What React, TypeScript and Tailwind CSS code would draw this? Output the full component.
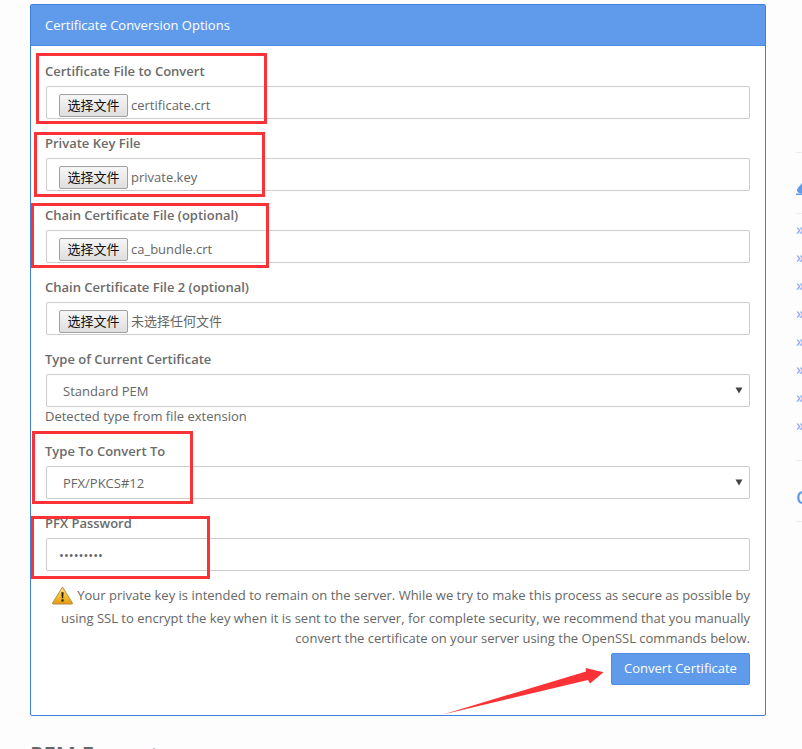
const font = { fontFamily: '"Open Sans", "Noto Sans CJK SC", sans-serif' };

function Label({ children }: { children: React.ReactNode }) {
  return <label className="block h-[18px] -ml-px text-[13px] leading-[18px] font-semibold text-[#6b6b6b] mb-[6px]">{children}</label>;
}

function FileField({ label, file }: { label: string; file: string }) {
  return (
    <div className="mb-[15px]">
      <Label>{label}</Label>
      <div className="h-[33px] border border-[#ccc] rounded-[2px] bg-white flex items-center pl-[12px] pt-[5px]">
        <button type="button" className="w-[69px] h-[23px] border border-[#a0a0a0] rounded-[2px] bg-gradient-to-b from-[#f6f6f6] to-[#dedede] text-[13px] leading-none text-[#111] flex items-center justify-center">选择文件</button>
        <span className="ml-[3px] pt-[2px] text-[13px] text-[#666]">{file}</span>
      </div>
    </div>
  );
}

function SelectField({ value }: { value: string }) {
  return (
    <div className="h-[33px] border border-[#ccc] rounded-[2px] bg-white flex items-center justify-between pl-[16px] pr-[6px] text-[13px] text-[#666]">
      <span className="pt-[2px]">{value}</span>
      <svg width="8" height="7" viewBox="0 0 8 7"><path d="M0.5 0.5h7L4 6.5z" fill="#444" /></svg>
    </div>
  );
}

function Warning() {
  return (
    <svg width="23" height="19" viewBox="0 0 23 20" className="inline-block align-[-7.5px] mb-[3px] mr-[3px]">
      <defs>
        <linearGradient id="w" x1="0" y1="0" x2="0" y2="1">
          <stop offset="0" stopColor="#f8e38a" />
          <stop offset="0.6" stopColor="#f5bb2b" />
          <stop offset="1" stopColor="#e09a12" />
        </linearGradient>
      </defs>
      <path d="M11.5 1 L22 18 Q22.3 19 21 19 H2 Q0.7 19 1 18 Z" fill="url(#w)" stroke="#b9894a" strokeWidth="1" strokeLinejoin="round" />
      <path d="M10.3 6.5h2.4l-.5 6.5h-1.4z" fill="#2b2110" />
      <rect x="10.4" y="14" width="2.2" height="2.4" fill="#2b2110" />
    </svg>
  );
}

function RedBox({ className }: { className: string }) {
  return <div className={`absolute border-[3px] border-[#fb3236] pointer-events-none ${className}`} />;
}

function Sidebar() {
  const links = [0, 1, 2, 3, 4, 5, 6, 7];
  return (
    <aside className="ml-[30px] w-[200px] shrink-0 pt-[148px] text-[#7f9ff0]">
      <div className="h-px bg-[#eee]" />
      <div className="h-[60px] flex items-end pb-[18px]">
        <svg width="14" height="12" viewBox="0 0 14 12">
          <path d="M6 0 C4 3 1 5 1 7.5 C1 9.5 3 10.5 6 10.5 C9 10.5 12 9.5 12 7 C12 4 8 3 6 0Z" fill="#5f9bea" />
          <rect x="0" y="10.5" width="14" height="1.5" fill="#5f9bea" />
        </svg>
      </div>
      <div className="h-px bg-[#eee]" />
      <div className="pt-px">
        {links.map((i) => (
          <div key={i} className="h-[28px] text-[16px] leading-[28px]">»</div>
        ))}
      </div>
      <div className="mt-[21px] h-px bg-[#eee]" />
      <div className="h-[60px] flex items-center pt-[12px] text-[18px] font-semibold text-[#5f9bea]">Certificate</div>
      <div className="h-px bg-[#eee]" />
    </aside>
  );
}

export default function App() {
  return (
    <div className="relative h-[749px] w-[802px] overflow-hidden bg-[#fdfdfd] flex pl-[30px] pt-[4px]" style={font}>
      <main className="w-[736px] shrink-0">
        <section className="h-[712px] border border-[#3f7fdc] rounded-[2px] bg-white">
          <header className="h-[41px] bg-[#5f9bea] border-b border-[#4f8be0] pl-[14px] pr-[15px] pt-[2px] flex items-center text-[13px] text-white">
            Certificate Conversion Options
          </header>
          <div className="px-[15px] pt-[16px]">
            <FileField label="Certificate File to Convert" file="certificate.crt" />
            <FileField label="Private Key File" file="private.key" />
            <FileField label="Chain Certificate File (optional)" file="ca_bundle.crt" />
            <FileField label="Chain Certificate File 2 (optional)" file="未选择任何文件" />

            <div className="mb-[17px]">
              <Label>Type of Current Certificate</Label>
              <SelectField value="Standard PEM" />
              <p className="h-[18px] -ml-px text-[13px] leading-[18px] text-[#666]">Detected type from file extension</p>
            </div>
            <div className="mb-[15px]">
              <Label>Type To Convert To</Label>
              <SelectField value="PFX/PKCS#12" />
            </div>
            <div>
              <Label>PFX Password</Label>
              <input
                type="password"
                readOnly
                defaultValue="123456789"
                className="block w-full h-[33px] border border-[#ccc] rounded-[2px] bg-white px-[12px] text-[13px] text-[#666] outline-none"
              />
            </div>
            <p className="mt-[14px] text-right text-[13px] leading-[20px] text-[#666]">
              <Warning />
              Your private key is intended to remain on the server. While we try to make this process as secure as possible by using SSL to encrypt the key when it is sent to the server, for complete security, we recommend that you manually convert the certificate on your server using the OpenSSL commands below.
            </p>
            <div className="flex justify-end mt-[5px]">
              <button type="button" className="w-[139px] h-[32px] pt-px bg-[#5f9bea] border border-[#4f8be0] rounded-[2px] text-[13px] text-white">
                Convert Certificate
              </button>
            </div>
          </div>
        </section>
        <h2 className="mt-[24px] text-[22px] leading-[28px] font-semibold text-[#666]">PEM Format</h2>
      </main>
      <Sidebar />

      <RedBox className="left-[36px] top-[53px] w-[231px] h-[71px]" />
      <RedBox className="left-[34px] top-[132px] w-[231px] h-[65px]" />
      <RedBox className="left-[31px] top-[203px] w-[238px] h-[65px]" />
      <RedBox className="left-[32px] top-[431px] w-[161px] h-[73px]" />
      <RedBox className="left-[31px] top-[516px] w-[179px] h-[63px]" />
      <svg className="absolute left-0 top-0 pointer-events-none" width="802" height="749" viewBox="0 0 802 749">
        <path d="M443 714.5 L586 671.5 L585.7 668 L603.5 672.3 L590 683.5 L588 680 Z" fill="#fb3236" />
      </svg>
    </div>
  );
}
